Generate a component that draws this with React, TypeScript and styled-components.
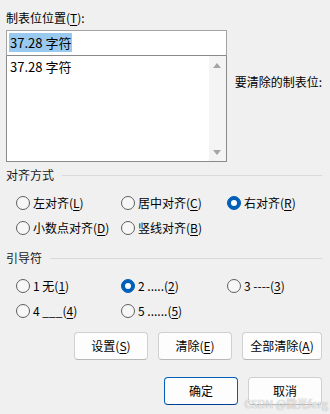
import styled, { createGlobalStyle } from "styled-components";

const GlobalStyle = createGlobalStyle`
  html, body {
    margin: 0;
    padding: 0;
    background: #f0f0f0;
  }
  * {
    box-sizing: border-box;
  }
`;

const alignOptions = [
  { label: "左对齐", key: "L", checked: false },
  { label: "居中对齐", key: "C", checked: false },
  { label: "右对齐", key: "R", checked: true },
  { label: "小数点对齐", key: "D", checked: false },
  { label: "竖线对齐", key: "B", checked: false },
];

const leaderOptions = [
  { label: "1 无", key: "1", checked: false },
  { label: "2 .....", key: "2", checked: true },
  { label: "3 ----", key: "3", checked: false },
  { label: "4 ___", key: "4", checked: false },
  { label: "5 ......", key: "5", checked: false },
];

const Accel = ({ k }: { k: string }) => (
  <>
    (<u>{k}</u>)
  </>
);

const App = () => {
  return (
    <Dialog>
      <GlobalStyle />
      <FieldLabel>
        制表位位置<Accel k="T" />:
      </FieldLabel>
      <TopArea>
        <StopColumn>
          <Input>
            <Selected>37.28 字符</Selected>
          </Input>
          <ListBox>
            <ListItems>
              <div>37.28 字符</div>
            </ListItems>
            <ScrollBar>
              <Arrow $up />
              <Arrow />
            </ScrollBar>
          </ListBox>
        </StopColumn>
        <SideLabel>要清除的制表位:</SideLabel>
      </TopArea>

      <SectionHeader>对齐方式</SectionHeader>
      <RadioGrid>
        {alignOptions.map((o) => (
          <RadioItem key={o.key}>
            <RadioDot $checked={o.checked} />
            <span>
              {o.label}
              <Accel k={o.key} />
            </span>
          </RadioItem>
        ))}
      </RadioGrid>

      <SectionHeader $gap={10}>引导符</SectionHeader>
      <RadioGrid>
        {leaderOptions.map((o) => (
          <RadioItem key={o.key}>
            <RadioDot $checked={o.checked} />
            <span>
              {o.label}
              <Accel k={o.key} />
            </span>
          </RadioItem>
        ))}
      </RadioGrid>

      <ButtonRow $top={9}>
        <Button>
          设置<Accel k="S" />
        </Button>
        <Button>
          清除<Accel k="E" />
        </Button>
        <Button $width={80}>
          全部清除<Accel k="A" />
        </Button>
      </ButtonRow>
      <ButtonRow $top={17}>
        <Button $primary>确定</Button>
        <Button>取消</Button>
      </ButtonRow>

      <Watermark>CSDN @微光ferg</Watermark>
    </Dialog>
  );
};

export default App;

const Dialog = styled.div`
  position: relative;
  width: 330px;
  height: 414px;
  padding: 10px 8px 0 6px;
  background: #f0f0f0;
  color: #000;
  font-family: "Noto Sans CJK SC", "Noto Sans", sans-serif;
  font-size: 12px;
  line-height: 16px;
  overflow: hidden;

  u {
    text-decoration-thickness: 1px;
    text-underline-offset: 2px;
  }
`;

const FieldLabel = styled.div`
  height: 16px;
`;

const TopArea = styled.div`
  display: flex;
  margin-top: 4px;
`;

const StopColumn = styled.div`
  width: 222px;
  display: flex;
  flex-direction: column;
`;

const Input = styled.div`
  height: 26px;
  border: 1px solid #a3a3a3;
  border-bottom-color: #8a8a8a;
  background: #fff;
  padding: 4px 2px;
  font-size: 13px;
  line-height: 15px;
`;

const Selected = styled.span`
  background: #99c9ef;
  padding: 0 1px;
`;

const ListBox = styled.div`
  height: 106px;
  border: 1px solid #8a8a8a;
  border-top: none;
  background: #fff;
  display: flex;
`;

const ListItems = styled.div`
  flex: 1;
  padding: 3px 3px;
  font-size: 13px;
  line-height: 16px;
`;

const ScrollBar = styled.div`
  width: 17px;
  background: #f4f4f4;
  display: flex;
  flex-direction: column;
  justify-content: space-between;
  align-items: center;
  padding: 7px 0 6px;
`;

const Arrow = styled.div<{ $up?: boolean }>`
  width: 0;
  height: 0;
  border-left: 4px solid transparent;
  border-right: 4px solid transparent;
  ${(p) =>
    p.$up
      ? "border-bottom: 5px solid #a5a5a5;"
      : "border-top: 5px solid #a5a5a5;"}
`;

const SideLabel = styled.div`
  margin: 44px 0 0 8px;
  white-space: nowrap;
`;

const SectionHeader = styled.div<{ $gap?: number }>`
  display: flex;
  align-items: center;
  gap: 8px;
  margin-top: ${(p) => p.$gap ?? 5}px;
  color: #1a1a1a;

  &::after {
    content: "";
    flex: 1;
    height: 1px;
    background: #d9d9d9;
  }
`;

const RadioGrid = styled.div`
  display: grid;
  grid-template-columns: 105px 106px 1fr;
  grid-auto-rows: 24px;
  row-gap: 1px;
  margin-top: 8px;
  padding-left: 10px;
`;

const RadioItem = styled.div`
  display: flex;
  align-items: center;
  gap: 3px;
  white-space: nowrap;
`;

const RadioDot = styled.span<{ $checked?: boolean }>`
  width: 14px;
  height: 14px;
  border-radius: 50%;
  flex: none;
  display: flex;
  align-items: center;
  justify-content: center;
  background: ${(p) => (p.$checked ? "#005fb8" : "#f7f7f7")};
  border: 1px solid ${(p) => (p.$checked ? "#005fb8" : "#5f5f5f")};

  &::after {
    content: "";
    width: 6px;
    height: 6px;
    border-radius: 50%;
    background: #fff;
    display: ${(p) => (p.$checked ? "block" : "none")};
  }
`;

const ButtonRow = styled.div<{ $top: number }>`
  display: flex;
  justify-content: flex-end;
  gap: 10px;
  margin-top: ${(p) => p.$top}px;
`;

const Button = styled.div<{ $width?: number; $primary?: boolean }>`
  width: ${(p) => p.$width ?? 74}px;
  height: 28px;
  display: flex;
  align-items: center;
  justify-content: center;
  background: #fdfdfd;
  border: 1px solid ${(p) => (p.$primary ? "#005fb8" : "#d0d0d0")};
  border-bottom-color: ${(p) => (p.$primary ? "#003e92" : "#b8b8b8")};
  border-radius: 4px;
  white-space: nowrap;
`;

const Watermark = styled.div`
  position: absolute;
  right: 2px;
  bottom: 5px;
  font-size: 11px;
  line-height: 12px;
  color: rgba(255, 255, 255, 0.8);
  text-shadow: 0 0 1px rgba(90, 90, 90, 0.7);
  font-family: "Noto Sans CJK SC", "Noto Sans", sans-serif;
`;
